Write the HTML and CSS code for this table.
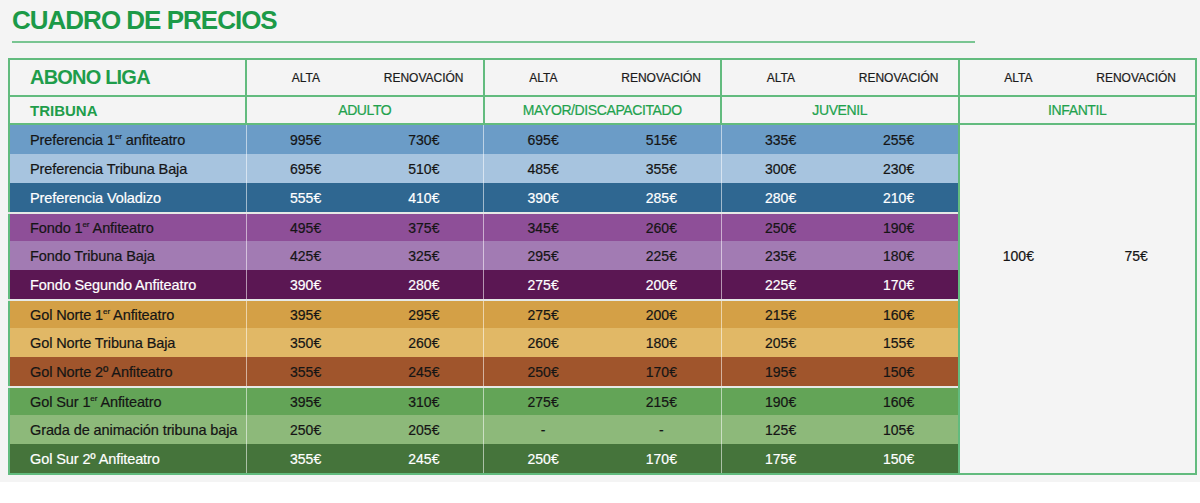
FILE: index.html
```html
<!DOCTYPE html>
<html lang="es">
<head>
<meta charset="utf-8">
<title>Cuadro de precios</title>
<link rel="stylesheet" href="styles.css">
</head>
<body>
<div class="panel">
  <h1 class="title">CUADRO DE PRECIOS</h1>
  <table class="prices">
    <colgroup>
      <col class="col-label">
      <col class="col-val"><col class="col-val">
      <col class="col-val"><col class="col-val">
      <col class="col-val"><col class="col-val">
      <col class="col-val"><col class="col-val">
    </colgroup>
    <thead>
      <tr class="head-1">
        <th class="abono">ABONO LIGA</th>
        <th class="sub g">ALTA</th><th class="sub">RENOVACIÓN</th>
        <th class="sub g">ALTA</th><th class="sub">RENOVACIÓN</th>
        <th class="sub g">ALTA</th><th class="sub">RENOVACIÓN</th>
        <th class="sub g">ALTA</th><th class="sub">RENOVACIÓN</th>
      </tr>
      <tr class="head-2">
        <th class="tribuna">TRIBUNA</th>
        <th class="cat g" colspan="2">ADULTO</th>
        <th class="cat g" colspan="2">MAYOR/DISCAPACITADO</th>
        <th class="cat g" colspan="2">JUVENIL</th>
        <th class="cat g" colspan="2">INFANTIL</th>
      </tr>
    </thead>
    <tbody>
      <tr class="row pref-a">
        <td class="label">Preferencia 1<sup>er</sup> anfiteatro</td>
        <td class="v g">995€</td><td class="v">730€</td>
        <td class="v g">695€</td><td class="v">515€</td>
        <td class="v g">335€</td><td class="v">255€</td>
        <td class="infantil g" rowspan="9">100€</td>
        <td class="infantil" rowspan="9">75€</td>
      </tr>
      <tr class="row pref-b">
        <td class="label">Preferencia Tribuna Baja</td>
        <td class="v g">695€</td><td class="v">510€</td>
        <td class="v g">485€</td><td class="v">355€</td>
        <td class="v g">300€</td><td class="v">230€</td>
      </tr>
      <tr class="row pref-c dark">
        <td class="label">Preferencia Voladizo</td>
        <td class="v g">555€</td><td class="v">410€</td>
        <td class="v g">390€</td><td class="v">285€</td>
        <td class="v g">280€</td><td class="v">210€</td>
      </tr>
      <tr class="row fondo-a sep">
        <td class="label">Fondo 1<sup>er</sup> Anfiteatro</td>
        <td class="v g">495€</td><td class="v">375€</td>
        <td class="v g">345€</td><td class="v">260€</td>
        <td class="v g">250€</td><td class="v">190€</td>
      </tr>
      <tr class="row fondo-b">
        <td class="label">Fondo Tribuna Baja</td>
        <td class="v g">425€</td><td class="v">325€</td>
        <td class="v g">295€</td><td class="v">225€</td>
        <td class="v g">235€</td><td class="v">180€</td>
      </tr>
      <tr class="row fondo-c dark">
        <td class="label">Fondo Segundo Anfiteatro</td>
        <td class="v g">390€</td><td class="v">280€</td>
        <td class="v g">275€</td><td class="v">200€</td>
        <td class="v g">225€</td><td class="v">170€</td>
      </tr>
      <tr class="row norte-a sep">
        <td class="label">Gol Norte 1<sup>er</sup> Anfiteatro</td>
        <td class="v g">395€</td><td class="v">295€</td>
        <td class="v g">275€</td><td class="v">200€</td>
        <td class="v g">215€</td><td class="v">160€</td>
      </tr>
      <tr class="row norte-b">
        <td class="label">Gol Norte Tribuna Baja</td>
        <td class="v g">350€</td><td class="v">260€</td>
        <td class="v g">260€</td><td class="v">180€</td>
        <td class="v g">205€</td><td class="v">155€</td>
      </tr>
      <tr class="row norte-c">
        <td class="label">Gol Norte 2º Anfiteatro</td>
        <td class="v g">355€</td><td class="v">245€</td>
        <td class="v g">250€</td><td class="v">170€</td>
        <td class="v g">195€</td><td class="v">150€</td>
      </tr>
      <tr class="row sur-a sep">
        <td class="label">Gol Sur 1<sup>er</sup> Anfiteatro</td>
        <td class="v g">395€</td><td class="v">310€</td>
        <td class="v g">275€</td><td class="v">215€</td>
        <td class="v g">190€</td><td class="v">160€</td>
        <td class="filler g" colspan="2" rowspan="3"></td>
      </tr>
      <tr class="row sur-b">
        <td class="label">Grada de animación tribuna baja</td>
        <td class="v g">250€</td><td class="v">205€</td>
        <td class="v g">-</td><td class="v">-</td>
        <td class="v g">125€</td><td class="v">105€</td>
      </tr>
      <tr class="row sur-c dark">
        <td class="label">Gol Sur 2º Anfiteatro</td>
        <td class="v g">355€</td><td class="v">245€</td>
        <td class="v g">250€</td><td class="v">170€</td>
        <td class="v g">175€</td><td class="v">150€</td>
      </tr>
    </tbody>
  </table>
</div>
</body>
</html>
```

FILE: styles.css
```css
html, body {
  margin: 0;
  padding: 0;
  background: #ffffff;
}

body {
  font-family: "Liberation Sans", Arial, sans-serif;
  color: #151515;
}

.panel {
  background: #f4f4f4;
  height: 482px;
  overflow: hidden;
}

.title {
  margin: 0 0 0 12px;
  width: 963px;
  padding: 5px 0 6px 0;
  font-size: 26px;
  line-height: 30px;
  font-weight: bold;
  letter-spacing: -1px;
  color: #1c9a48;
  border-bottom: 2px solid #79c592;
}

.prices {
  margin: 15px 0 0 8px;
  border-collapse: collapse;
  table-layout: fixed;
  width: 1187px;
  border: 2px solid #62bb7e;
}

.col-label { width: 237px; }
.col-val { width: 118.75px; }

.prices th,
.prices td {
  padding: 0;
  text-align: center;
  vertical-align: middle;
  white-space: nowrap;
}

.head-1 th {
  height: 35px;
  border-bottom: 2px solid #62bb7e;
  font-size: 12px;
  font-weight: normal;
  color: #1b1b1b;
  -webkit-text-stroke: 0.2px currentColor;
}

.head-2 th {
  height: 26px;
  border-bottom: 2px solid #62bb7e;
}

.prices thead th.g {
  border-left: 2px solid #62bb7e;
}

.head-1 th.abono {
  text-align: left;
  padding-left: 20px;
  font-size: 20px;
  font-weight: bold;
  letter-spacing: -0.8px;
  color: #1f9d4b;
  -webkit-text-stroke: 0;
}

.head-2 th.tribuna {
  text-align: left;
  padding-left: 20px;
  font-size: 15px;
  font-weight: bold;
  color: #1f9d4b;
}

.head-2 th.cat {
  font-size: 14px;
  font-weight: normal;
  letter-spacing: -0.4px;
  color: #22a24d;
  -webkit-text-stroke: 0.2px currentColor;
}

.row td {
  height: 29px;
  font-size: 14px;
  line-height: 16px;
  -webkit-text-stroke: 0.2px currentColor;
}

.row td.label {
  text-align: left;
  padding-left: 20px;
  font-size: 14.5px;
  letter-spacing: -0.1px;
}

.row td.v.g {
  border-left: 1px solid rgba(255, 255, 255, 0.55);
}

.row td sup {
  font-size: 8px;
  line-height: 0;
  vertical-align: 6px;
}

.row.sep td {
  height: 27px;
  border-top: 2px solid #e6e9e6;
}

.row td.infantil {
  background: #f4f4f4;
  color: #151515;
  font-size: 14px;
}

.row td.infantil.g,
.row.sep td.filler {
  border-left: 2px solid #62bb7e;
}

.row.sep td.filler {
  background: #f4f4f4;
  border-top: none;
}

.row.dark td { color: #ffffff; }

.pref-a td { background: #6b9cc7; }
.pref-b td { background: #a7c4df; }
.pref-c td { background: #2f6791; }
.fondo-a td { background: #8e4f98; }
.fondo-b td { background: #a27bb3; }
.fondo-c td { background: #5b1753; }
.norte-a td { background: #d4a046; }
.norte-b td { background: #e1b866; }
.norte-c td { background: #a0552c; }
.sur-a td { background: #63a457; }
.sur-b td { background: #8db97a; }
.sur-c td { background: #45743b; }
```
